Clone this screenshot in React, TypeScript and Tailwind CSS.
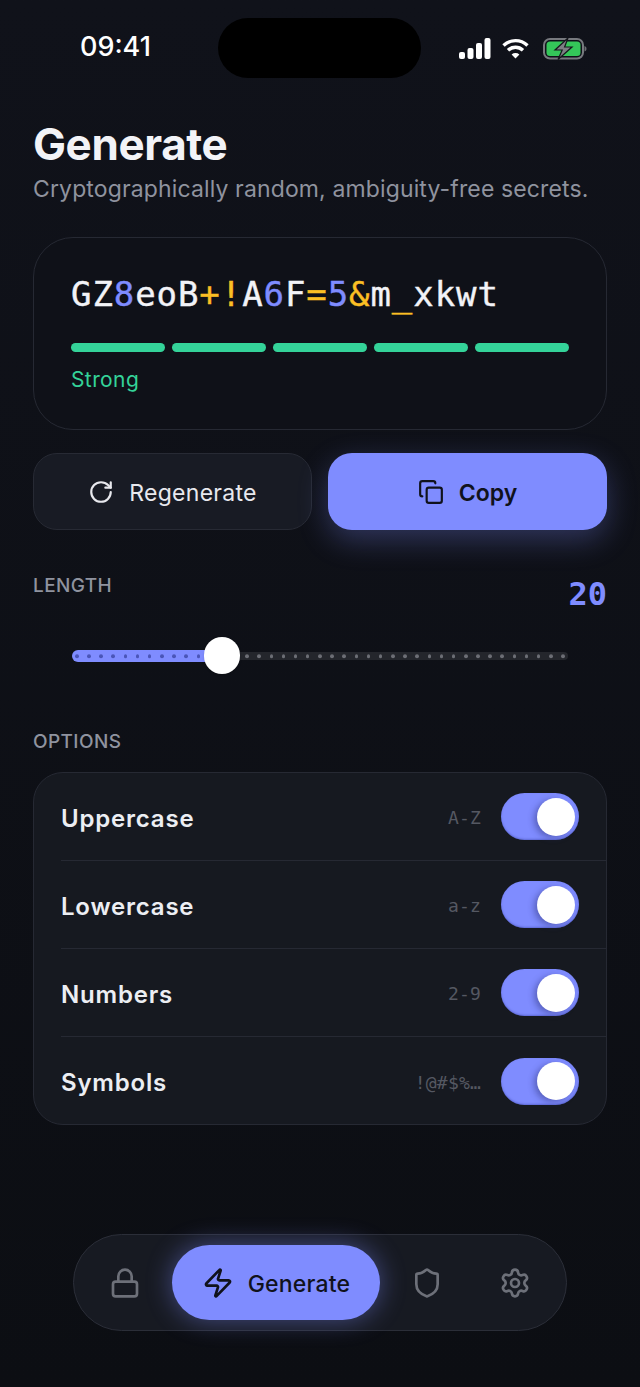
import { Copy, Lock, RotateCw, Settings, Shield, Zap } from "lucide-react";

const sans = "font-['Inter','Noto_Sans',sans-serif]";
const mono = "font-['DejaVu_Sans_Mono','Liberation_Mono',monospace]";

const secret: [string, string][] = [
  ["G", "w"], ["Z", "w"], ["8", "b"], ["e", "w"], ["o", "w"], ["B", "w"], ["+", "y"], ["!", "y"], ["A", "w"], ["6", "b"],
  ["F", "w"], ["=", "y"], ["5", "b"], ["&", "y"], ["m", "w"], ["_", "y"], ["x", "w"], ["k", "w"], ["w", "w"], ["t", "w"],
];

const charColor: Record<string, string> = {
  w: "text-[#f2f3f7]",
  b: "text-[#7f8cff]",
  y: "text-[#fbbf24]",
};

const options = [
  { label: "Uppercase", hint: "A-Z" },
  { label: "Lowercase", hint: "a-z" },
  { label: "Numbers", hint: "2-9" },
  { label: "Symbols", hint: "!@#$%…" },
];

const StatusBar = () => (
  <div className="relative h-[94px] shrink-0">
    <span className={`absolute left-[80px] top-[31px] text-[27px] leading-8 font-medium text-white ${sans}`}>09:41</span>
    <div className="absolute left-[218px] top-[18px] h-[60px] w-[203px] rounded-full bg-black" />
    <div className="absolute left-[459px] top-[37px] flex items-center">
      <svg width="32" height="21" viewBox="0 0 32 21" fill="#fff">
        <rect x="0" y="14" width="6" height="7" rx="2" />
        <rect x="8.500" y="10" width="6" height="11" rx="2" />
        <rect x="17" y="5" width="6" height="16" rx="2" />
        <rect x="25.500" y="0" width="6" height="21" rx="2" />
      </svg>
      <svg className="ml-[11px]" width="27" height="21" viewBox="0 0 27 21" fill="none" stroke="#fff" strokeWidth="3.400">
        <path d="M1.500 7.600C8.400 1 18.600 1 25.500 7.600" />
        <path d="M6 12.200c4.400-4 10.600-4 15 0" />
        <path d="M13.500 20.600 9.600 16.400c2.300-1.800 5.500-1.800 7.800 0z" fill="#fff" stroke="none" />
      </svg>
      <svg className="ml-[14px]" width="44" height="23" viewBox="0 0 44 23" fill="none">
        <rect x="1" y="2" width="39" height="19.500" rx="6" stroke="#77797e" strokeWidth="2" />
        <rect x="3.500" y="4.500" width="34" height="14.500" rx="3.500" fill="#34c759" />
        <path d="M41.500 9v5.500c1.300-.4 2-1.500 2-2.750s-.7-2.350-2-2.750z" fill="#6c6e73" />
        <path d="M25 1 12 13h7.200L15 22.500 29 10h-7.400z" fill="#7d7f84" stroke="#15171c" strokeWidth="1.200" />
      </svg>
    </div>
  </div>
);

const SliderDots = () => (
  <div className="absolute inset-x-[3px] top-1/2 flex -translate-y-1/2 justify-between">
    {Array.from({ length: 41 }, (_, i) => (
      <span key={i} className={`h-[3.500px] w-[3.500px] rounded-full ${i < 12 ? "bg-[#4a55b8]" : "bg-[#6c6e75]"}`} />
    ))}
  </div>
);

const Toggle = () => (
  <div className="flex h-[47px] w-[78px] items-center justify-end rounded-full bg-[#7f8cff] pr-[4px] shadow-[inset_0_-1px_2px_rgba(60,70,170,0.5)]">
    <div className="h-[38px] w-[38px] rounded-full bg-white shadow-[-3px_2px_6px_rgba(40,45,110,0.45)]" />
  </div>
);

export default function App() {
  return (
    <div className={`flex h-[1387px] w-[640px] flex-col overflow-hidden bg-gradient-to-b from-[#10121a] to-[#0c0e13] ${sans}`}>
      <StatusBar />

      <main className="flex flex-1 flex-col px-[33px]">
        {/* Header */}
        <h1 className="mt-[22px] text-[44px] leading-[56px] font-bold tracking-[-0.400px] text-[#f2f3f7]">Generate</h1>
        <p className="mt-[1px] text-[23px] leading-[32px] tracking-[0.130px] text-[#8f939f]">
          Cryptographically random, ambiguity-free secrets.
        </p>

        {/* Generated secret */}
        <section className="mt-[32px] h-[193px] rounded-[40px] border border-[#262933] bg-[#0f1118] px-[37px] pt-[32px]">
          <div className={`text-[34px] leading-[48px] tracking-[0.920px] [-webkit-text-stroke:0.4px_currentColor] ${mono}`}>
            {secret.map(([ch, tone], i) => (
              <span key={i} className={charColor[tone]}>
                {ch}
              </span>
            ))}
          </div>
          <div className="mt-[25px] flex gap-[7px]">
            {[0, 1, 2, 3, 4].map((i) => (
              <div key={i} className="h-[9px] flex-1 rounded-full bg-[#34d399]" />
            ))}
          </div>
          <p className="mt-[14px] text-[21px] leading-[28px] tracking-[0.400px] text-[#34d399]">Strong</p>
        </section>

        {/* Actions */}
        <div className="mt-[23px] flex gap-[16px]">
          <button className="flex h-[77px] w-[279px] items-center justify-center gap-[15px] rounded-[24px] border border-[#272a34] bg-[#181b24] text-[23px] text-[#e8e9ee]">
            <RotateCw size={26} strokeWidth={2} />
            <span className="pt-[4px] tracking-[0.300px]">Regenerate</span>
          </button>
          <button className="flex h-[77px] flex-1 items-center justify-center gap-[15px] rounded-[24px] bg-[#7f8cff] text-[23px] font-semibold text-[#10121c] shadow-[0_10px_30px_rgba(127,140,255,0.3)]">
            <Copy size={26} strokeWidth={2} />
            <span className="pt-[4px]">Copy</span>
          </button>
        </div>

        {/* Length */}
        <div className="mt-[42px] flex items-start justify-between">
          <span className="text-[19px] leading-[28px] font-medium tracking-[0.400px] text-[#8f939f]">LENGTH</span>
          <span className={`mt-[2px] text-[32px] leading-[40px] font-bold text-[#7f8cff] ${mono}`}>20</span>
        </div>
        <div className="relative mx-[39px] mt-[23px] flex h-[38px] items-center">
          <div className="h-[12px] w-[140px] rounded-l-full bg-[#7f8cff]" />
          <div className="h-[8px] flex-1 rounded-r-full bg-[#24262c]" />
          <SliderDots />
          <div className="absolute left-[132px] top-0 h-[37px] w-[36px] rounded-full bg-white shadow-sm" />
        </div>

        {/* Options */}
        <span className="mt-[53px] text-[19px] leading-[28px] font-medium tracking-[0.400px] text-[#8f939f]">OPTIONS</span>
        <section className="mt-[16px] h-[353px] rounded-[30px] border border-[#262933] bg-[#161920] pl-[27px]">
          {options.map((opt, i) => (
            <div
              key={opt.label}
              className={`flex h-[88px] items-center pr-[27px] ${i < options.length - 1 ? "border-b border-[#262933]" : ""}`}
            >
              <span className="flex-1 pt-[4px] text-[24px] font-semibold tracking-[0.800px] text-[#eceef3]">{opt.label}</span>
              <span className={`mr-[20px] pt-[2px] text-[18px] tracking-[0.200px] text-[#555862] ${mono}`}>{opt.hint}</span>
              <Toggle />
            </div>
          ))}
        </section>
      </main>

      {/* Tab bar */}
      <nav className="mx-auto mb-[56px] flex h-[97px] w-[494px] items-center rounded-full border border-[#2b2e38] bg-[#171a22] pl-[10px]">
        <div className="-ml-[3px] mr-[3px] flex w-[88px] justify-center text-[#6d7079]">
          <Lock size={32} strokeWidth={2} />
        </div>
        <div className="flex h-[75px] w-[208px] items-center justify-center gap-[14px] rounded-full bg-[#7f8cff] text-[23px] font-medium text-[#10121c] shadow-[0_0_26px_rgba(127,140,255,0.45)]">
          <Zap size={32} strokeWidth={2} />
          <span className="pt-[4px] tracking-[0.200px]">Generate</span>
        </div>
        <div className="ml-[3px] flex w-[88px] justify-center text-[#6d7079]">
          <Shield size={32} strokeWidth={2} />
        </div>
        <div className="flex w-[88px] justify-center text-[#6d7079]">
          <Settings size={32} strokeWidth={2} />
        </div>
      </nav>
    </div>
  );
}
